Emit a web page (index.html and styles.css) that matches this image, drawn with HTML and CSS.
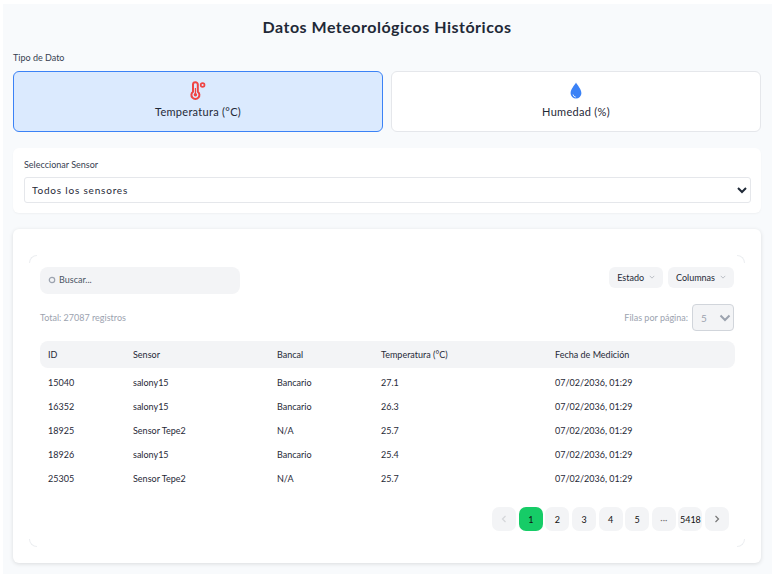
FILE: index.html
```html
<!DOCTYPE html>
<html lang="es">
<head>
<meta charset="utf-8">
<title>Datos Meteorológicos Históricos</title>
<link rel="stylesheet" href="styles.css">
</head>
<body>
<main class="page">
  <h1 class="title">Datos Meteorológicos Históricos</h1>
  <div class="type-label">Tipo de Dato</div>
  <div class="type-grid">
    <button class="type-card active">
      <svg class="type-icon" viewBox="0 0 20 20" width="20" height="20"><path d="M5 3.600a2.400 2.400 0 0 1 4.800 0v7.100a4 4 0 1 1-4.800 0z" fill="none" stroke="#ef4444" stroke-width="2"/><circle cx="7.400" cy="13.800" r="1.700" fill="#ef4444"/><path d="M7.400 7v6" stroke="#ef4444" stroke-width="1.200"/><circle cx="14.600" cy="4" r="1.900" fill="none" stroke="#ef4444" stroke-width="1.700"/></svg>
      <span>Temperatura (°C)</span>
    </button>
    <button class="type-card">
      <svg class="type-icon" viewBox="0 0 20 20" width="20" height="20"><path d="M10 1.500C8.500 4.500 4.600 8 4.600 12.200a5.400 5.400 0 0 0 10.800 0C15.400 8 11.500 4.500 10 1.500z" fill="#3b82f6"/><path d="M7 13.500a3.200 3.200 0 0 0 2.800 2.600" fill="none" stroke="#dbeafe" stroke-width="1"/></svg>
      <span>Humedad (%)</span>
    </button>
  </div>
  <section class="sensor-panel">
    <label class="sensor-label" for="sensor">Seleccionar Sensor</label>
    <select class="sensor-select" id="sensor"><option>Todos los sensores</option></select>
  </section>
  <section class="table-card">
    <div class="table-inner">
      <i class="corner tl"></i><i class="corner tr"></i><i class="corner bl"></i><i class="corner br"></i>
      <div class="toolbar">
        <div class="search">
          <svg viewBox="0 0 10 10" width="8" height="8"><circle cx="5" cy="5" r="3.400" fill="none" stroke="#9ca3af" stroke-width="1.500"/></svg>
          <span>Buscar...</span>
        </div>
        <div class="filters">
          <button class="filter">Estado <svg viewBox="0 0 8 8" width="6" height="6"><path d="M1 2.500l3 3 3-3" fill="none" stroke="#b6bac1" stroke-width="1.200"/></svg></button>
          <button class="filter">Columnas <svg viewBox="0 0 8 8" width="6" height="6"><path d="M1 2.500l3 3 3-3" fill="none" stroke="#b6bac1" stroke-width="1.200"/></svg></button>
        </div>
      </div>
      <div class="meta">
        <span>Total: 27087 registros</span>
        <div class="per-page">
          <span>Filas por página:</span>
          <div class="per-select">5 <svg viewBox="0 0 12 8" width="12" height="8"><path d="M1.500 1.500L6 6l4.500-4.500" fill="none" stroke="#9ca3af" stroke-width="2"/></svg></div>
        </div>
      </div>
      <table class="data">
        <thead>
          <tr><th class="c-id">ID</th><th class="c-sensor">Sensor</th><th class="c-bancal">Bancal</th><th class="c-temp">Temperatura (°C)</th><th>Fecha de Medición</th></tr>
        </thead>
        <tbody>
          <tr><td>15040</td><td>salony15</td><td>Bancario</td><td>27.1</td><td>07/02/2036, 01:29</td></tr>
          <tr><td>16352</td><td>salony15</td><td>Bancario</td><td>26.3</td><td>07/02/2036, 01:29</td></tr>
          <tr><td>18925</td><td>Sensor Tepe2</td><td>N/A</td><td>25.7</td><td>07/02/2036, 01:29</td></tr>
          <tr><td>18926</td><td>salony15</td><td>Bancario</td><td>25.4</td><td>07/02/2036, 01:29</td></tr>
          <tr><td>25305</td><td>Sensor Tepe2</td><td>N/A</td><td>25.7</td><td>07/02/2036, 01:29</td></tr>
        </tbody>
      </table>
      <nav class="pager">
        <button class="pg disabled"><svg viewBox="0 0 8 8" width="8" height="8"><path d="M5.500 1L2.500 4l3 3" fill="none" stroke="#d5d7da" stroke-width="1.200"/></svg></button>
        <button class="pg current">1</button>
        <button class="pg">2</button>
        <button class="pg">3</button>
        <button class="pg">4</button>
        <button class="pg">5</button>
        <button class="pg dots">···</button>
        <button class="pg">5418</button>
        <button class="pg"><svg viewBox="0 0 8 8" width="8" height="8"><path d="M2.500 1l3 3-3 3" fill="none" stroke="#777" stroke-width="1.200"/></svg></button>
      </nav>
    </div>
  </section>
</main>
</body>
</html>
```
FILE: styles.css
```css
* { box-sizing: border-box; }
html, body { margin: 0; background: #fff; }
body {
  padding: 4px 0 0 3px;
  font-family: Lato, sans-serif;
  color: #1f2937;
  height: 574px;
  overflow: hidden;
}
button, select { font-family: inherit; }
.page {
  background: #f8fafc;
  height: 570px;
  padding: 0 11px 0 10px;
}
.title {
  margin: 0;
  padding-top: 13px;
  height: 47px;
  font-size: 16px;
  line-height: 20px;
  font-weight: 700;
  letter-spacing: 0.5px;
  text-align: center;
}
.type-label {
  height: 20px;
  font-size: 9px;
  line-height: 14px;
  color: #374151;
}
.type-grid {
  display: grid;
  grid-template-columns: 370px 370px;
  gap: 8px;
}
.type-card {
  height: 61px;
  padding: 9px 0 0;
  background: #fff;
  border: 1px solid #e5e7eb;
  border-radius: 6px;
  display: flex;
  flex-direction: column;
  align-items: center;
  gap: 2px;
  font-size: 11px;
  line-height: 18px;
  letter-spacing: 0.3px;
  color: #1f2937;
}
.type-card.active {
  background: #dbeafe;
  border-color: #3b82f6;
}
.type-icon { display: block; }
.sensor-panel {
  margin-top: 16px;
  height: 65px;
  padding: 10px 10px 0 11px;
  background: #fff;
  border-radius: 6px;
  box-shadow: 0 1px 2px rgba(0,0,0,.04);
}
.sensor-label {
  display: block;
  height: 19px;
  font-size: 9px;
  line-height: 13px;
  color: #374151;
}
.sensor-select {
  display: block;
  width: 100%;
  height: 26px;
  padding: 0 3px;
  background: #fff;
  border: 1px solid #e5e7eb;
  border-radius: 3px;
  font-size: 10px;
  letter-spacing: 0.8px;
  color: #1f2937;
}
.table-card {
  margin-top: 16px;
  height: 334px;
  padding: 26px 16px 16px;
  background: #fff;
  border-radius: 6px;
  box-shadow: 0 1px 4px rgba(0,0,0,.12);
}
.table-inner {
  position: relative;
  height: 292px;
  padding: 12px 11px 0;
}
.corner {
  position: absolute;
  width: 8px;
  height: 8px;
  border: 0 solid #eceef1;
}
.tl { left: 0; top: 0; border-top-width: 1px; border-left-width: 1px; border-top-left-radius: 8px; }
.tr { right: 0; top: 0; border-top-width: 1px; border-right-width: 1px; border-top-right-radius: 8px; }
.bl { left: 0; bottom: 0; border-bottom-width: 1px; border-left-width: 1px; border-bottom-left-radius: 8px; }
.br { right: 0; bottom: 0; border-bottom-width: 1px; border-right-width: 1px; border-bottom-right-radius: 8px; }
.toolbar {
  display: flex;
  justify-content: space-between;
  align-items: flex-start;
  height: 37px;
}
.search {
  width: 200px;
  height: 27px;
  padding: 0 0 2px 8px;
  display: flex;
  align-items: center;
  gap: 3px;
  background: #f3f4f6;
  border-radius: 8px;
  font-size: 9px;
  color: #4b5563;
}
.filters { display: flex; gap: 5px; }
.filter {
  height: 21px;
  padding: 0 8px 1px;
  display: flex;
  align-items: center;
  gap: 5px;
  background: #f3f4f6;
  border: 0;
  border-radius: 6px;
  font-size: 9px;
  color: #1f2937;
}
.meta {
  display: flex;
  justify-content: space-between;
  align-items: center;
  height: 27px;
  font-size: 9px;
  color: #9ca3af;
}
.per-page { display: flex; align-items: center; gap: 4px; }
.per-select {
  width: 42px;
  height: 27px;
  padding: 0 2px 0 8px;
  display: flex;
  align-items: center;
  justify-content: space-between;
  background: #f3f4f6;
  border: 1px solid #d1d5db;
  border-radius: 4px;
  font-size: 10px;
}
.data {
  width: 695px;
  margin-top: 10px;
  border-collapse: separate;
  border-spacing: 0;
  table-layout: fixed;
  font-size: 9px;
  color: #1f2937;
}
.data th {
  height: 27px;
  padding: 0 8px;
  background: #f3f4f6;
  font-weight: 400;
  text-align: left;
}
.data th:first-child { border-radius: 8px 0 0 8px; }
.data th:last-child { border-radius: 0 8px 8px 0; }
.c-id { width: 85px; }
.c-sensor { width: 144px; }
.c-bancal { width: 104px; }
.c-temp { width: 174px; }
.data td {
  height: 24px;
  padding: 0 8px;
}
.data tbody tr:first-child td { padding-top: 2px; height: 26px; }
.pager {
  display: flex;
  justify-content: flex-end;
  gap: 2.600px;
  margin: 17px 5px 0 0;
}
.pg {
  width: 24px;
  height: 24px;
  padding: 0;
  display: flex;
  align-items: center;
  justify-content: center;
  background: #f3f4f6;
  border: 0;
  border-radius: 7px;
  font-size: 9px;
  color: #111;
}
.pg.current { background: #16cc67; }
.pg.dots { color: #777; }
```
